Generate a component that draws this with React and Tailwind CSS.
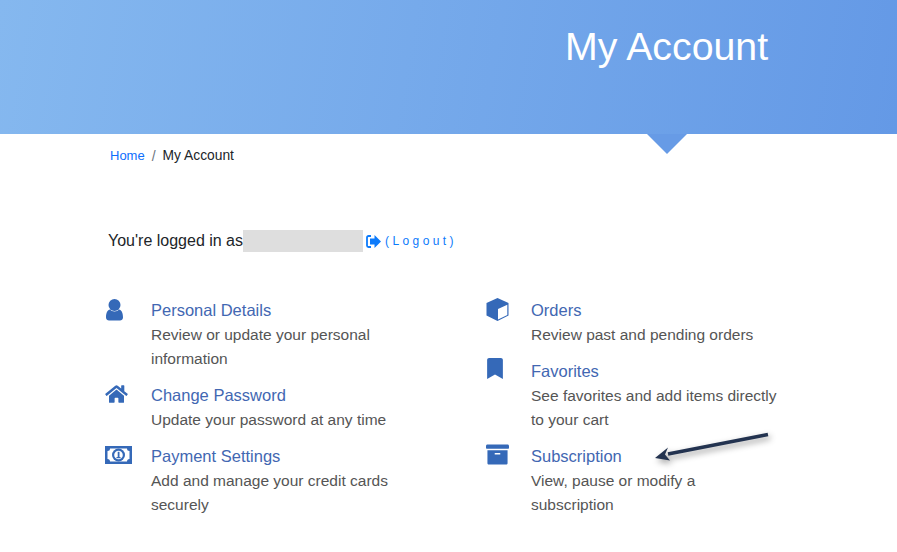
import React from 'react';
import { FaHome, FaBookmark, FaArchive } from 'react-icons/fa';

const UserIcon = () => (
    <svg className="h-[22px] w-[19px] text-[#3569b8]" viewBox="0 0 19 22" fill="currentColor">
        <circle cx="9.500" cy="6" r="6" />
        <path d="M1 18.500C1 13.500 2.500 11 5 10.500 6 11.800 7.600 12.500 9.500 12.500S13 11.800 14 10.500C16.500 11 18 13.500 18 18.500 18 20.500 16.500 21.500 15 21.500H4C2.500 21.500 1 20.500 1 18.500Z" />
    </svg>
);

const MoneyIcon = () => (
    <svg className="mt-[1px] h-[18px] w-[27px] text-[#3569b8]" viewBox="0 0 27 18">
        <rect width="27" height="18" fill="currentColor" />
        <path d="M5 2.500H22Q22 5 24.500 5V13Q22 13 22 15.500H5Q5 13 2.500 13V5Q5 5 5 2.500Z" fill="#ffffff" />
        <circle cx="13.500" cy="9" r="6.500" fill="currentColor" />
        <circle cx="13.500" cy="9" r="4.300" fill="#ffffff" />
        <rect x="12.700" y="5.800" width="1.800" height="6" fill="currentColor" />
        <rect x="11.500" y="11" width="4" height="1.200" fill="currentColor" />
    </svg>
);

const CubeIcon = () => (
    <svg className="-mt-[1px] ml-[1px] h-[23px] w-[23px] text-[#3569b8]" viewBox="0 0 23 23">
        <path d="M11.500 0 22.500 5V17.500L11.500 23 .500 17.500V5Z" fill="currentColor" />
        <path d="M12 11 21.300 6.800V17L12 21.600Z" fill="#ffffff" />
    </svg>
);

const leftItems = [
    { icon: UserIcon, title: 'Personal Details', text: ['Review or update your personal', 'information'] },
    { icon: () => <FaHome className="h-[20px] w-[23px] text-[#3569b8]" />, title: 'Change Password', text: ['Update your password at any time'] },
    { icon: MoneyIcon, title: 'Payment Settings', text: ['Add and manage your credit cards', 'securely'] },
];

const rightItems = [
    { icon: CubeIcon, title: 'Orders', text: ['Review past and pending orders'] },
    { icon: () => <FaBookmark className="-mt-[2px] ml-[1px] h-[21px] w-[18px] text-[#3569b8]" />, title: 'Favorites', text: ['See favorites and add items directly', 'to your cart'] },
    { icon: () => <FaArchive className="-mt-[2px] ml-[1px] h-[23px] w-[23px] text-[#3569b8]" />, title: 'Subscription', text: ['View, pause or modify a', 'subscription'] },
];

const AccountItem = ({ item }) => {
    const Icon = item.icon;
    return (
        <div className="flex">
            <div className="w-[46px] shrink-0 pt-[1px]">
                <Icon />
            </div>
            <div className="text-[15.500px] leading-[24px] text-[#555555]">
                <div className="text-[16.500px] leading-[25px] text-[#4267b2]">{item.title}</div>
                {item.text.map((line) => (
                    <div key={line}>{line}</div>
                ))}
            </div>
        </div>
    );
};

const App = () => {
    return (
        <div className="relative h-[552px] w-[897px] overflow-hidden bg-white font-['Liberation_Sans',Arial,sans-serif]">
            <header className="relative h-[134px] bg-[linear-gradient(100deg,#85b8ef,#6499e6)]">
                <h1 className="pl-[565px] pt-[21px] text-[39.300px] leading-[50px] text-white">My Account</h1>
                <div className="absolute left-[647px] top-[134px] h-0 w-0 border-x-[20px] border-t-[20px] border-x-transparent border-t-[#679be6]" />
            </header>

            <nav className="flex pl-[110px] pt-[13px] text-[13px] leading-[18px] text-[#212529]">
                <a className="text-[#0d6efd]">Home</a>
                <span className="pl-[7px] pr-[7px] text-[14px] text-[#6c757d]">/</span>
                <span className="text-[13.800px]">My Account</span>
            </nav>

            <div className="flex items-center pl-[108px] pt-[65px] text-[16px] leading-[22px] text-[#212529]">
                <span>You're logged in as</span>
                <span className="h-[22px] w-[120px] bg-[#dedede]" />
                <svg className="ml-[3px] h-[13px] w-[15px] text-[#0d7bfb]" viewBox="0 0 15 13" fill="currentColor">
                    <path d="M5 1H2.500A1.500 1.500 0 0 0 1 2.500v8A1.500 1.500 0 0 0 2.500 12H5" fill="none" stroke="currentColor" strokeWidth="1.800" />
                    <path d="M8.500 0 15 6.500 8.500 13V9.500H4V3.500H8.500z" />
                </svg>
                <a className="ml-[4px] text-[12px] tracking-[3.400px] text-[#0d7bfb]">(Logout)</a>
            </div>

            <div className="flex pl-[105px] pt-[46px]">
                <div className="flex w-[380px] flex-col gap-[12px]">
                    {leftItems.map((item) => (
                        <AccountItem key={item.title} item={item} />
                    ))}
                </div>
                <div className="flex flex-col gap-[12px]">
                    {rightItems.map((item) => (
                        <AccountItem key={item.title} item={item} />
                    ))}
                </div>
            </div>

            <svg className="absolute left-[650px] top-[428px] h-[40px] w-[125px] drop-shadow-[2px_3px_3px_rgba(0,0,0,0.4)]" viewBox="0 0 125 40">
                <path d="M118 6.500 18 26" stroke="#233350" strokeWidth="3.500" fill="none" />
                <path d="M5 30 18 19.500 15 26.500 20 32.500z" fill="#233350" />
            </svg>
        </div>
    );
};

export default App;
